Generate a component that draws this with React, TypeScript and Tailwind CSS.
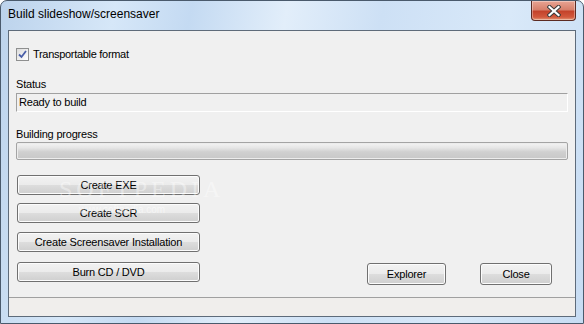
import React from "react";

const font = { fontFamily: '"Liberation Sans", Arial, sans-serif' };

function Btn({ label, className }: { label: string; className: string }) {
  return (
    <div
      className={
        "flex items-center justify-center rounded-[3px] border border-[#707070] bg-[linear-gradient(to_bottom,#f2f2f2_0%,#ebebeb_50%,#dddddd_51%,#cfcfcf_100%)] text-[11px] tracking-[-0.2px] text-black shadow-[inset_0_0_0_1px_#fcfcfc] " +
        className
      }
    >
      {label}
    </div>
  );
}

export default function App() {
  return (
    <div
      className="relative w-[584px] h-[324px] overflow-hidden rounded-t-[7px] border border-[#4a5a6c] bg-[linear-gradient(100deg,#bcd3ec_0%,#d6e7f8_18%,#c4daf2_30%,#e2eefa_45%,#cde0f5_60%,#d9e9f9_80%,#c7dcf3_100%)]"
      style={font}
    >
      {/* title bar */}
      <div className="flex h-[29px] items-start">
        <div className="pl-[7px] pt-[6px] text-[12px] leading-[15px] text-black">
          Build slideshow/screensaver
        </div>
        <div className="ml-auto mr-[7px] flex h-[20px] w-[45px] items-center justify-center rounded-b-[4px] border border-t-0 border-[#5b2a22] bg-[linear-gradient(to_bottom,#e8a493_0%,#d7806c_45%,#c4432b_55%,#d2593d_85%,#e39a7a_100%)] shadow-[inset_0_0_0_1px_rgba(255,255,255,0.35)]">
          <svg width="14" height="12" viewBox="0 0 14 12">
            <path
              d="M2.5 2 L11.5 10 M11.5 2 L2.5 10"
              stroke="#3b3b3b"
              strokeWidth="4.2"
              strokeLinecap="square"
            />
            <path
              d="M2.5 2 L11.5 10 M11.5 2 L2.5 10"
              stroke="#ffffff"
              strokeWidth="2.2"
              strokeLinecap="square"
            />
          </svg>
        </div>
      </div>

      {/* client area */}
      <div className="mx-[7px] flex h-[287px] flex-col border border-[#5e6b7a] bg-[#f0f0f0]">
        <div className="flex flex-1 flex-col px-[7px]">
          <div className="mt-[17px] flex items-center gap-[4px]">
            <div className="flex h-[13px] w-[13px] items-center justify-center border border-[#8e8f8f] bg-[linear-gradient(135deg,#dcdcdc,#ffffff)]">
              <svg width="9" height="9" viewBox="0 0 9 9">
                <path d="M1 4.5 L3.5 7 L8 1" stroke="#4a5fa8" strokeWidth="1.8" fill="none" />
              </svg>
            </div>
            <span className="text-[11px] leading-[13px] tracking-[-0.3px] text-black">
              Transportable format
            </span>
          </div>

          <div className="mt-[17px] text-[11px] leading-[13px] tracking-[-0.2px] text-black">Status</div>
          <div className="mt-[2px] flex h-[19px] items-center border border-[#a0a0a0] border-b-white border-r-white pl-[2px] text-[11px] tracking-[-0.2px] text-black">
            Ready to build
          </div>

          <div className="mt-[16px] text-[11px] leading-[13px] tracking-[-0.2px] text-black">Building progress</div>
          <div className="mt-[1px] h-[18px] rounded-[2px] border border-[#a4a4a4] bg-[linear-gradient(to_bottom,#f4f4f4_0%,#e6e6e6_30%,#d0d0d0_55%,#c8c8c8_100%)] shadow-[inset_0_0_0_1px_#ececec]" />

          <div className="mt-[15px] flex">
            <div className="flex flex-col gap-[8px] pl-[1px]">
              <Btn label="Create EXE" className="h-[20px] w-[183px]" />
              <Btn label="Create SCR" className="h-[20px] w-[183px]" />
              <Btn label="Create Screensaver Installation" className="h-[20px] w-[183px] mt-[1px]" />
              <Btn label="Burn CD / DVD" className="h-[20px] w-[183px] mt-[2px]" />
            </div>
            <div className="ml-auto flex items-end gap-[34px] pr-[16px]">
              <Btn label="Explorer" className="h-[22px] w-[79px] mb-[-3px]" />
              <Btn label="Close" className="h-[22px] w-[72px] mb-[-3px]" />
            </div>
          </div>
        </div>
        <div className="h-[19px] border-t border-[#a0a0a0] bg-[#f0eeec]" />
      </div>

      {/* watermark */}
      <div
        className="pointer-events-none absolute left-[58px] top-[170px] text-[24px] tracking-[4px] text-white/40"
        style={{ fontFamily: '"Liberation Serif", serif' }}
      >
        SOFTPEDIA
      </div>
      <div className="pointer-events-none absolute left-[78px] top-[201px] text-[10px] text-white/50">
        www.softpedia.com
      </div>
    </div>
  );
}
